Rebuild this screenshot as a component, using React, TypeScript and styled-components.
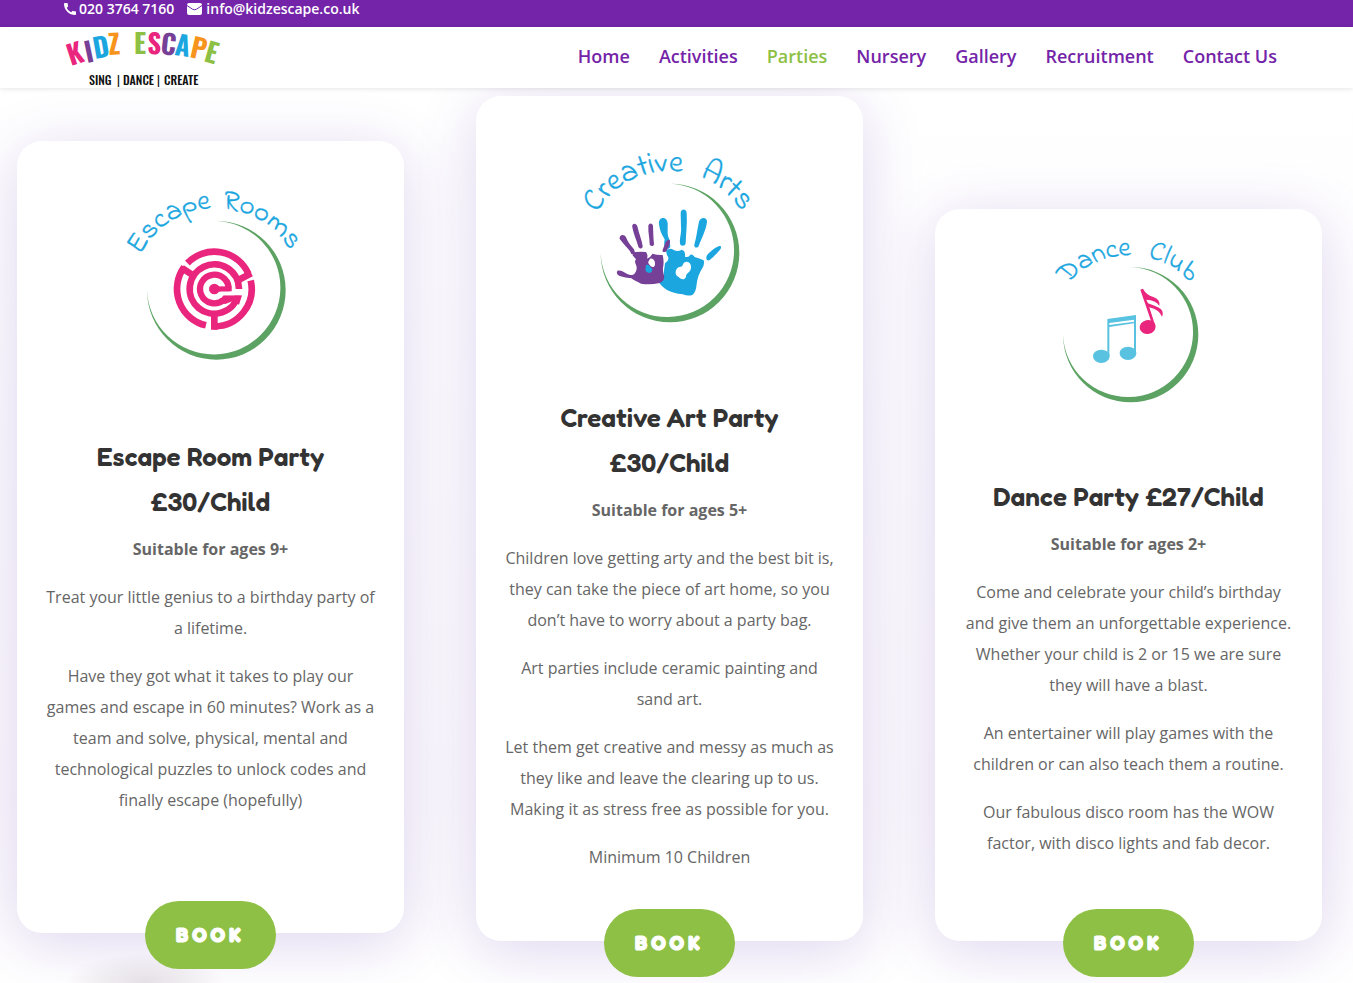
import React from "react";
import styled, { createGlobalStyle } from "styled-components";
import { MdCall } from "react-icons/md";

const purple = "#7424a8";
const green = "#8dc044";
const sky = "#1ba6df";
const pink = "#e9257d";
const leaf = "#5ca363";
const violet = "#774097";
const rounded = `"Fredoka One", Fredoka, "Baloo 2", "Varela Round", Nunito, Lato, sans-serif`;
const condensed = `Oswald, "Roboto Condensed", "Open Sans Condensed", "Liberation Sans Narrow", Roboto, sans-serif`;

const GlobalStyle = createGlobalStyle`
  * { box-sizing: border-box; }
  body {
    margin: 0;
    background: #fff;
    color: #666;
    font-family: "Open Sans", Arial, sans-serif;
    font-size: 16px;
    line-height: 31px;
  }
`;

const Page = styled.div`
  min-height: 100vh;
  display: flex;
  flex-direction: column;
`;

const TopBar = styled.div`
  display: flex;
  gap: 13px;
  height: 27px;
  padding: 0 62px;
  background: ${purple};
`;

const ContactLink = styled.a`
  display: flex;
  align-items: center;
  gap: 1px;
  height: 18px;
  color: #fff;
  font-size: 14px;
  font-weight: 600;
  line-height: 18px;
  text-decoration: none;
`;

const MailLink = styled(ContactLink)`
  gap: 4px;
`;

const Header = styled.header`
  position: relative;
  z-index: 1;
  display: flex;
  align-items: center;
  justify-content: space-between;
  height: 61px;
  padding: 0 76px 0 62px;
  background: #fff;
  box-shadow: 0 1px 5px rgba(0, 0, 0, 0.1);
`;

const LogoLink = styled.a`
  display: flex;
`;

const Art = styled.svg`
  overflow: visible;
`;

const Nav = styled.nav`
  display: flex;
  gap: 29px;
  padding-bottom: 4px;
`;

const NavLink = styled.a<{ $active?: boolean }>`
  color: ${(p) => (p.$active ? green : purple)};
  font-size: 18px;
  font-weight: 600;
  line-height: 24px;
  text-decoration: none;
`;

const Main = styled.main`
  flex: 1;
  display: grid;
  grid-template-columns: repeat(3, 1fr);
  gap: 72px;
  align-items: end;
  padding: 8px 31px 42px 17px;
  overflow: hidden;
  background:
    radial-gradient(ellipse 80px 30px at 145px 100%, rgba(90, 60, 80, 0.14), transparent),
    linear-gradient(#fff 0%, #fdfcfe 40%, #fcfafd 80%, #fff 100%);
`;

const Card = styled.article<{ $raised?: boolean }>`
  display: flex;
  flex-direction: column;
  align-items: center;
  padding: 10px 28px 0;
  margin-bottom: ${(p) => (p.$raised ? 8 : 0)}px;
  border-radius: 25px;
  background: #fff;
  box-shadow: 0 10px 60px rgba(92, 44, 170, 0.19);
  text-align: center;
`;

const Title = styled.h2`
  margin: 0 0 10px;
  color: #333;
  font-family: ${rounded};
  font-size: 26px;
  font-weight: 600;
  line-height: 45px;
`;

const Copy = styled.div<{ $space: number }>`
  display: flex;
  flex-direction: column;
  gap: 17px;
  margin-bottom: ${(p) => p.$space}px;
`;

const Text = styled.p`
  margin: 0;
`;

const BookButton = styled.button`
  height: 68px;
  margin-bottom: -36px;
  padding: 0 31px;
  border: 0;
  border-radius: 34px;
  background: ${green};
  color: #fff;
  font-family: ${rounded};
  font-size: 20px;
  font-weight: 900;
  letter-spacing: 4px;
  -webkit-text-stroke: 1px #fff;
  cursor: pointer;
`;

const Lettering = styled.text`
  fill: ${sky};
  stroke: ${sky};
  stroke-width: 1px;
  font-family: "Indie Flower", Lato, cursive;
`;

const LogoLetters = styled.text`
  font-family: ${condensed};
  font-size: 27px;
  font-weight: 700;
`;

const LogoTagline = styled.text`
  fill: #111;
  font-family: ${condensed};
  font-size: 12px;
  font-weight: 500;
`;

const logoLetters: [string, number, number, number, string][] = [
  ["K", 9, 38, -18, pink],
  ["I", 25, 35, -12, violet],
  ["D", 33, 31, -10, sky],
  ["Z", 47, 27, -4, "#f7941d"],
  ["E", 72, 26, 0, green],
  ["S", 85, 26, 2, pink],
  ["C", 98, 26, 6, violet],
  ["A", 112, 27, 8, sky],
  ["P", 127, 29, 13, "#f7941d"],
  ["E", 141, 33, 16, green],
];

function Logo() {
  return (
    <Art width="160" height="60" viewBox="0 0 160 60" role="img" aria-label="Kidz Escape">
      <LogoLetters>
        {logoLetters.map(([letter, x, y, turn, color], i) => (
          <tspan key={i} x={x} y={y} rotate={turn} fill={color}>
            {letter}
          </tspan>
        ))}
      </LogoLetters>
      <LogoTagline>
        <tspan x="27" y="57">SING</tspan>
        <tspan x="55" fontWeight="400">|</tspan>
        <tspan x="61">DANCE</tspan>
        <tspan x="95" fontWeight="400">|</tspan>
        <tspan x="102">CREATE</tspan>
      </LogoTagline>
    </Art>
  );
}

function MailIcon() {
  return (
    <svg width="15" height="12" viewBox="0 0 15 12" aria-hidden="true">
      <rect width="15" height="12" rx="2" fill="#fff" />
      <path d="M0 2.5 L5.5 6.2 Q7.5 7.4 9.5 6.2 L15 2.5" fill="none" stroke={purple} strokeWidth="1" />
    </svg>
  );
}

/* Point on a circle, with the angle in degrees counted anticlockwise from the right. */
function polar(cx: number, cy: number, r: number, deg: number) {
  const a = (deg * Math.PI) / 180;
  return `${(cx + r * Math.cos(a)).toFixed(1)} ${(cy - r * Math.sin(a)).toFixed(1)}`;
}

/* Clockwise arc between two angles. */
function arc(cx: number, cy: number, r: number, from: number, to: number) {
  return `M${polar(cx, cy, r, from)} A${r} ${r} 0 ${from - to > 180 ? 1 : 0} 1 ${polar(cx, cy, r, to)}`;
}

function Crescent({ cx, cy, r }: { cx: number; cy: number; r: number }) {
  const d = 8;
  const inner = Math.sqrt(d * d + (r - d) * (r - d));
  return (
    <path
      fill={leaf}
      d={`M${cx} ${cy - r} A${r} ${r} 0 1 1 ${cx - r} ${cy} A${inner} ${inner} 0 1 0 ${cx} ${cy - r}Z`}
    />
  );
}

type Word = { text: string; from: number };

function ArcText({ id, cx, cy, r, size, words }: { id: string; cx: number; cy: number; r: number; size: number; words: Word[] }) {
  return (
    <>
      {words.map((w, i) => (
        <React.Fragment key={w.text}>
          <path id={`${id}${i}`} d={arc(cx, cy, r, w.from, -20)} fill="none" />
          <Lettering fontSize={size}>
            <textPath href={`#${id}${i}`}>{w.text}</textPath>
          </Lettering>
        </React.Fragment>
      ))}
    </>
  );
}

function EscapeRoomsPicture() {
  const x = 312;
  const y = 357;
  return (
    <Art width="200" height="283" viewBox="2 -57 600 849" role="img" aria-label="Escape Rooms">
      <ArcText id="rooms" cx={318} cy={371} r={256} size={86} words={[{ text: "Escape", from: 153 }, { text: "Rooms", from: 86 }]} />
      <Crescent cx={318} cy={361} r={208} />
      <g fill="none" stroke={pink} strokeWidth="20">
        <path d={arc(x, y, 112, 136, 24)} />
        <path d={arc(x, y, 112, 13, -90)} />
        <path d={arc(x, y, 112, 257, 144)} />
        <path d={arc(x, y, 74, 346, 0)} />
        <path d={arc(x, y, 43, 310, -8)} strokeWidth="19" />
        <path d="M423 310 L380 332 M215 294 L252 319 M312 430 V479" />
      </g>
      <path d="M338 376 H395 L386 404 L366 394 L345 402 L326 398Z" fill={pink} />
      <circle cx={x} cy={y} r="16" fill={pink} />
      <path d="M312 349 H358 V365 H312Z" fill={pink} />
      <path d="M332 365 H399 V376 H340 L331 384 L322 378Z" fill="#fff" />
    </Art>
  );
}

function CreativeArtsPicture() {
  return (
    <Art width="200" height="289" viewBox="0 -72 600 867" role="img" aria-label="Creative Arts">
      <ArcText id="arts" cx={298} cy={375} r={252} size={94} words={[{ text: "Creative", from: 150 }, { text: "Arts", from: 69 }]} />
      <Crescent cx={300} cy={369} r={208} />
      <g fill={sky}>
        <path d="M267 282 C264 258 292 258 293 280 C294 300 290 315 299 330 L301 352 L287 362 C283 350 281 342 284 328 C274 312 269 300 267 282Z" />
        <path d="M332 250 C332 235 350 235 350 250 C352 280 348 310 347 340 C346 350 330 350 330 340 C328 325 335 310 333 290Z" />
        <path d="M387 275 C391 260 412 260 411 276 C408 300 396 322 386 348 C382 356 371 353 373 344 C379 322 382 298 387 275Z" />
        <path d="M414 372 C424 362 438 351 448 348 C454 347 455 353 450 359 C440 370 430 382 419 390 C410 395 404 383 414 372Z" />
        <path d="M288 362 Q300 352 311 360 Q324 366 335 359 Q347 362 345 380 Q356 384 361 374 Q368 371 374 381 Q388 385 401 391 Q405 402 396 416 Q383 436 380 462 Q378 486 368 494 Q357 500 338 493 Q310 490 291 480 Q270 465 266 455 Q282 450 281 430 L285 400 Q302 388 291 376Z" />
      </g>
      <path d="M344 397 C357 390 367 405 362 418 C359 430 348 428 348 441 C342 454 330 446 326 441 C311 435 316 411 331 410 C339 412 337 401 344 397Z" fill="#fff" />
      <g fill={violet}>
        <path d="M149 327 C147 313 163 311 168 322 C175 340 184 348 192 358 L197 374 L184 372 C180 361 174 357 167 349Z" />
        <path d="M187 292 C184 279 199 278 202 289 C207 312 216 332 218 348 C219 357 208 358 205 350 C199 330 190 310 187 292Z" />
        <path d="M235 289 C235 278 249 278 249 289 C250 308 250 325 252 342 C252 350 240 350 239 343 C239 325 234 308 235 289Z" />
        <path d="M287 337 C292 328 301 325 300 336 C299 348 294 353 290 362 C285 369 275 367 278 359Z" />
        <path d="M142 423 C150 419 160 426 172 432 C187 440 197 432 200 416 C201 402 190 398 198 388 L187 375 L196 366 Q214 364 228 366 Q235 375 231 386 Q242 383 247 371 Q263 376 278 375 Q283 396 279 413 Q278 430 283 440 Q282 454 269 459 Q240 465 213 461 Q193 452 184 445 C170 443 149 441 142 433 Q139 427 142 423Z" />
      </g>
      <path d="M240 386 C249 382 257 393 255 404 C253 414 244 412 239 405 Q232 398 236 394Z" fill="#fff" />
      <path d="M228 405 Q239 401 241 412 Q251 415 244 427 Q232 433 226 421Z" fill={sky} />
    </Art>
  );
}

function DanceClubPicture() {
  return (
    <Art width="180" height="255" viewBox="-3 -3 540 765" role="img" aria-label="Dance Club">
      <ArcText id="dance" cx={268} cy={350} r={244} size={82} words={[{ text: "Dance", from: 140 }, { text: "Club", from: 77 }]} />
      <Crescent cx={272} cy={344} r={203} />
      <g fill="#59c2e0">
        <path d="M202 297 L288 285 V402 H282 V310 L208 321 V408 H202Z M208 309 V315 L282 305 V299Z" fillRule="evenodd" />
        <ellipse cx="184" cy="409" rx="25" ry="20" />
        <ellipse cx="264" cy="400" rx="25" ry="20" />
      </g>
      <g fill={pink}>
        <ellipse cx="323" cy="321" rx="24" ry="21" transform="rotate(-12 323 321)" />
        <path d="M301 209 L309 206 Q318 224 340 231 Q361 238 358 257 Q347 240 319 239 L324 250 Q341 256 354 262 Q374 271 366 290 Q359 270 328 262 L346 318 L339 320Z" />
      </g>
    </Art>
  );
}

type Party = {
  title: string;
  picture: React.ReactNode;
  copy: string[];
  ages: string;
  space: number;
  raised?: boolean;
};

const parties: Party[] = [
  {
    title: "Escape Room Party £30/Child",
    picture: <EscapeRoomsPicture />,
    ages: "Suitable for ages 9+",
    copy: [
      "Treat your little genius to a birthday party of a lifetime.",
      "Have they got what it takes to play our games and escape in 60 minutes? Work as a team and solve, physical, mental and technological puzzles to unlock codes and finally escape (hopefully)",
    ],
    space: 85,
    raised: true,
  },
  {
    title: "Creative Art Party £30/Child",
    picture: <CreativeArtsPicture />,
    ages: "Suitable for ages 5+",
    copy: [
      "Children love getting arty and the best bit is, they can take the piece of art home, so you don’t have to worry about a party bag.",
      "Art parties include ceramic painting and sand art.",
      "Let them get creative and messy as much as they like and leave the clearing up to us. Making it as stress free as possible for you.",
      "Minimum 10 Children",
    ],
    space: 36,
  },
  {
    title: "Dance Party £27/Child",
    picture: <DanceClubPicture />,
    ages: "Suitable for ages 2+",
    copy: [
      "Come and celebrate your child’s birthday and give them an unforgettable experience. Whether your child is 2 or 15 we are sure they will have a blast.",
      "An entertainer will play games with the children or can also teach them a routine.",
      "Our fabulous disco room has the WOW factor, with disco lights and fab decor.",
    ],
    space: 50,
  },
];

const pages = ["Home", "Activities", "Parties", "Nursery", "Gallery", "Recruitment", "Contact Us"];

export default function App() {
  return (
    <Page>
      <GlobalStyle />
      <TopBar>
        <ContactLink href="tel:02037647160">
          <MdCall size={16} aria-hidden="true" />
          020 3764 7160
        </ContactLink>
        <MailLink href="mailto:info@kidzescape.co.uk">
          <MailIcon />
          info@kidzescape.co.uk
        </MailLink>
      </TopBar>
      <Header>
        <LogoLink href="#home">
          <Logo />
        </LogoLink>
        <Nav>
          {pages.map((name) => (
            <NavLink key={name} href="#" $active={name === "Parties"}>
              {name}
            </NavLink>
          ))}
        </Nav>
      </Header>
      <Main>
        {parties.map((party) => (
          <Card key={party.title} $raised={party.raised}>
            {party.picture}
            <Title>{party.title}</Title>
            <Copy $space={party.space}>
              <Text>
                <strong>{party.ages}</strong>
              </Text>
              {party.copy.map((text) => (
                <Text key={text}>{text}</Text>
              ))}
            </Copy>
            <BookButton type="button">BOOK</BookButton>
          </Card>
        ))}
      </Main>
    </Page>
  );
}
